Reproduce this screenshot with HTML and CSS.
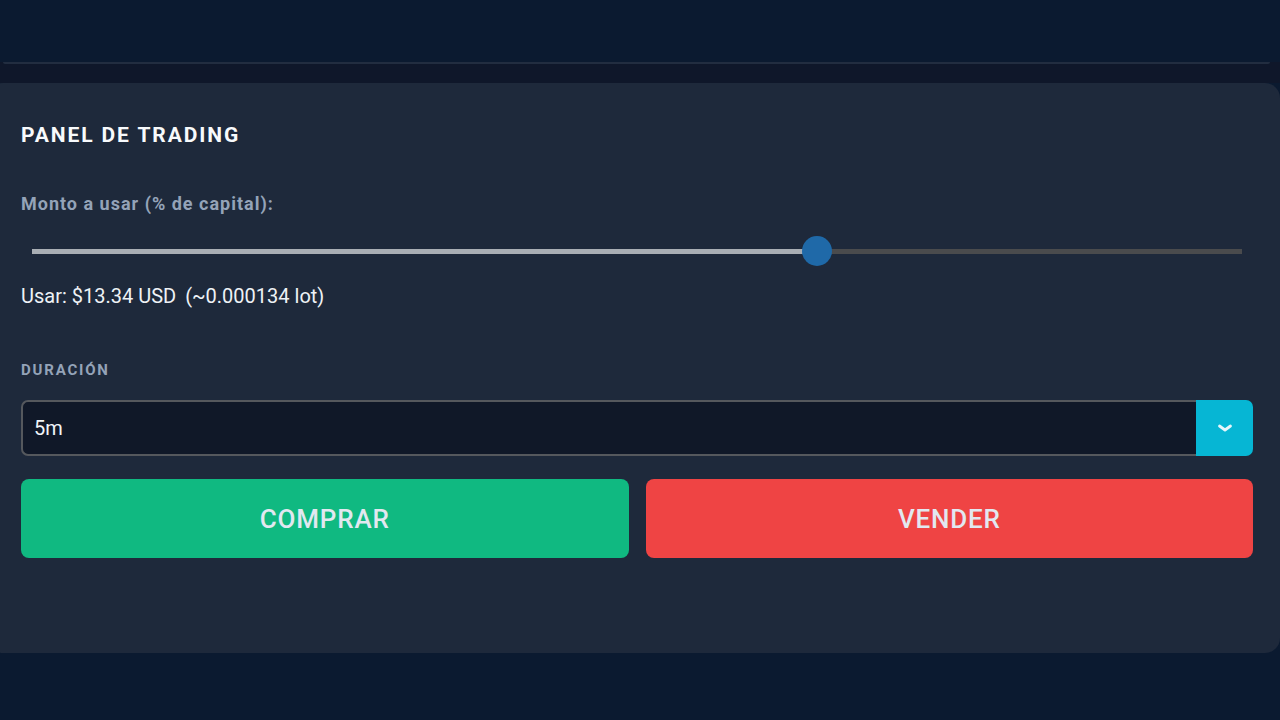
FILE: index.html
```html
<!DOCTYPE html>
<html lang="es">
<head>
<meta charset="utf-8">
<title>Panel de Trading</title>
<link rel="stylesheet" href="styles.css">
</head>
<body>
<div class="top"></div>
<div class="band"><div class="band-line"></div></div>
<section class="panel">
  <h2 class="title">PANEL DE TRADING</h2>
  <div class="field-label">Monto a usar (% de capital):</div>
  <div class="slider">
    <div class="track">
      <div class="fill" style="width:64.9%"></div>
    </div>
    <div class="thumb" style="left:64.9%"></div>
  </div>
  <div class="amount"><span>Usar: $13.34 USD</span><span class="lot">(~0.000134 lot)</span></div>
  <div class="small-label">DURACIÓN</div>
  <div class="select">
    <div class="select-value">5m</div>
    <div class="select-btn">
      <svg width="16" height="10" viewBox="0 0 16 10"><path d="M2.5 3 L8 7 L13.5 3" fill="none" stroke="#e6f6fb" stroke-width="2.8" stroke-linecap="round" stroke-linejoin="round"/></svg>
    </div>
  </div>
  <div class="actions">
    <button class="btn buy">COMPRAR</button>
    <button class="btn sell">VENDER</button>
  </div>
</section>
</body>
</html>
```
FILE: styles.css
```css
* { box-sizing: border-box; }
html, body { margin: 0; padding: 0; }
body {
  background: #0b1a30;
  font-family: Roboto, "Liberation Sans", Arial, sans-serif;
  width: 1280px;
  height: 720px;
  overflow: hidden;
}
.top { height: 62px; background: #0b1a30; }
.band { height: 21px; background: #0f172a; }
.band-line {
  height: 2px;
  margin: 0 10px 0 3px;
  background: #222d40;
  border-radius: 0 0 2px 2px;
}
.panel {
  margin-left: -12px;
  width: 1292px;
  height: 570px;
  background: #1e293b;
  border-radius: 15px;
  padding: 39px 27px 0 33px;
}
.title {
  margin: 0;
  font-size: 21px;
  line-height: 26px;
  font-weight: 700;
  color: #f8fafc;
  letter-spacing: 1.9px;
}
.field-label {
  margin-top: 45px;
  font-size: 18px;
  line-height: 22px;
  font-weight: 700;
  color: #94a3b8;
  letter-spacing: 1px;
}
.slider {
  position: relative;
  margin: 21px 11px 0 11px;
  height: 30px;
  display: flex;
  align-items: center;
}
.track {
  width: 100%;
  height: 5px;
  background: #4a4b4d;
}
.fill { height: 100%; background: #a9aeb4; }
.thumb {
  position: absolute;
  top: 0;
  width: 30px;
  height: 30px;
  margin-left: -15px;
  border-radius: 50%;
  background: #1f69a8;
}
.amount {
  margin-top: 18px;
  font-size: 20px;
  line-height: 24px;
  color: #eef2f6;
  display: flex;
  gap: 9px;
}
.small-label {
  margin-top: 53px;
  font-size: 15px;
  line-height: 18px;
  font-weight: 700;
  color: #94a3b8;
  letter-spacing: 1.8px;
}
.select {
  margin-top: 21px;
  height: 56px;
  display: flex;
}
.select-value {
  flex: 1;
  background: #101828;
  border: 2px solid #55585d;
  border-right: none;
  border-radius: 7px 0 0 7px;
  color: #f1f5f9;
  font-size: 20px;
  display: flex;
  align-items: center;
  padding-left: 11px;
}
.select-btn {
  width: 57px;
  background: #06b6d4;
  border-radius: 0 7px 7px 0;
  display: flex;
  align-items: center;
  justify-content: center;
}
.actions {
  margin-top: 23px;
  display: flex;
  gap: 17px;
}
.btn {
  flex: 1;
  height: 79px;
  border: none;
  border-radius: 8px;
  font-family: Roboto, "Liberation Sans", Arial, sans-serif;
  font-size: 26px;
  font-weight: 500;
  letter-spacing: 0.8px;
  color: #e2e8f0;
}
.buy { background: #10b981; }
.sell { background: #ef4444; }
```
